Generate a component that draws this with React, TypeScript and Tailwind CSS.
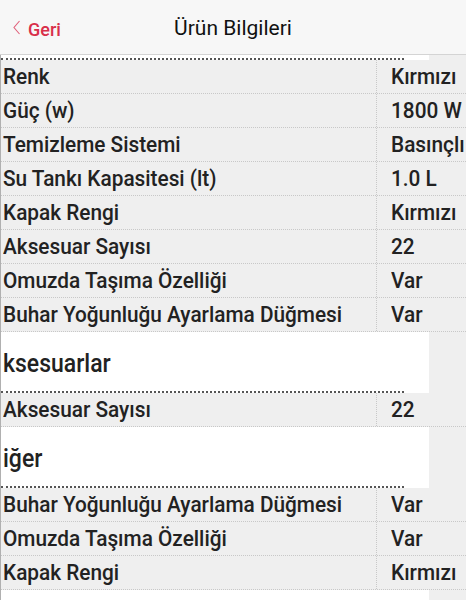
import React from "react";

const font = { fontFamily: "Roboto, 'Noto Sans', sans-serif" };

function Row({ label, value }: { label: string; value: string }) {
  return (
    <div className="flex h-[34px] border-b border-dotted border-[#c8c8c8] bg-[#efefef]">
      <div className="flex h-full w-[376px] shrink-0 items-center border-r border-dotted border-[#c8c8c8] pl-[2px]">
        <span className="inline-block origin-left scale-x-[0.945] whitespace-nowrap text-[22px] font-medium leading-none text-[#222]">
          {label}
        </span>
      </div>
      <div className="flex h-full items-center pl-[14px]">
        <span className="inline-block origin-left scale-x-[0.945] whitespace-nowrap text-[22px] font-medium leading-none text-[#222]">
          {value}
        </span>
      </div>
    </div>
  );
}

function Section({ title, h }: { title?: string; h: string }) {
  return (
    <div className="flex bg-[#efefef]">
      <div className="w-[428px] bg-white">
        <div className={`${h} flex items-center pl-[2px] pt-[3px]`}>
          {title && (
            <span className="inline-block origin-left scale-x-[0.92] whitespace-nowrap text-[25px] font-medium leading-none text-[#222]">
              {title}
            </span>
          )}
        </div>
        <div className="w-[403px] border-b-[2px] border-dotted border-[#555]" />
      </div>
    </div>
  );
}

export default function App() {
  return (
    <div style={font} className="h-[600px] w-[466px] overflow-hidden bg-[#efefef]">
      <div className="relative flex h-[55px] items-center justify-center border-b border-[#d4d4d4] bg-[#f7f7f7]">
        <div className="absolute left-[12px] top-[19px] flex items-start gap-[7px]">
          <svg width="9" height="15" viewBox="0 0 9 15" className="mt-[1px]">
            <path d="M7.5 1 L2 7.5 L7.5 14" fill="none" stroke="#e0607a" strokeWidth="1.1" />
          </svg>
          <span className="mt-[1px] text-[18px] font-medium leading-[20px] text-[#d9304a]">Geri</span>
        </div>
        <span className="mt-[4px] text-[21px] text-[#111]">Ürün Bilgileri</span>
      </div>
      <div className="border-l border-[#b0b0b0]">
        <Section h="h-[1px]" />
        <Row label="Renk" value="Kırmızı" />
        <Row label="Güç (w)" value="1800 W" />
        <Row label="Temizleme Sistemi" value="Basınçlı" />
        <Row label="Su Tankı Kapasitesi (lt)" value="1.0 L" />
        <Row label="Kapak Rengi" value="Kırmızı" />
        <Row label="Aksesuar Sayısı" value="22" />
        <Row label="Omuzda Taşıma Özelliği" value="Var" />
        <Row label="Buhar Yoğunluğu Ayarlama Düğmesi" value="Var" />
        <Section title="ksesuarlar" h="h-[59px]" />
        <Row label="Aksesuar Sayısı" value="22" />
        <Section title="iğer" h="h-[59px]" />
        <Row label="Buhar Yoğunluğu Ayarlama Düğmesi" value="Var" />
        <Row label="Omuzda Taşıma Özelliği" value="Var" />
        <Row label="Kapak Rengi" value="Kırmızı" />
        <div className="h-[40px] w-[428px] bg-white" />
      </div>
    </div>
  );
}
